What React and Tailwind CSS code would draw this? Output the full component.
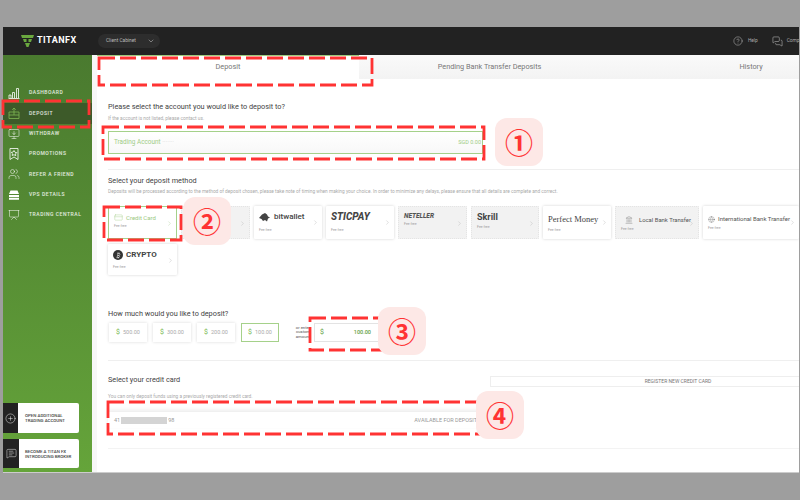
import {
  ChevronDown,
  ChevronRight,
  CircleHelp,
  MessagesSquare,
  CreditCard,
  Landmark,
  Globe,
  Bitcoin,
  CirclePlus,
  MonitorDown,
  Users,
  Presentation,
  MessageSquareText,
} from "lucide-react";

function BarsIcon({ className }) {
  return (
    <svg width="12" height="12" viewBox="0 0 12 12" fill="none" stroke="currentColor" strokeWidth="0.8" className={className}>
      <path d="M0.5 11.5h11M1 11V8h2v3M4.5 11V5.500h2V11M8.500 11V1.500h2V11" />
    </svg>
  );
}

function BoxIcon({ className }) {
  return (
    <svg width="12" height="12" viewBox="0 0 12 12" fill="none" stroke="currentColor" strokeWidth="0.8" className={className}>
      <path d="M1 5h10v6.500H1zM1 8h10M6 8V1M4.200 2.800 6 1l1.800 1.800" />
    </svg>
  );
}

function RibbonIcon({ className }) {
  return (
    <svg width="12" height="12" viewBox="0 0 12 12" fill="none" stroke="currentColor" strokeWidth="0.8" className={className}>
      <path d="M2 0.500h8v11L6 9l-4 2.500zM6 2.500l1 1.800 1.800.3-1.300 1.300.3 1.800L6 6.700l-1.800.8.300-1.800-1.300-1.300 1.800-.3z" />
    </svg>
  );
}

function ServerIcon({ className }) {
  return (
    <svg width="12" height="12" viewBox="0 0 12 12" fill="currentColor" className={className}>
      <path d="M2.500 1.500h7L11 5H1zM1 6h10v2.200H1zM1 9h10v1.800H1z" />
    </svg>
  );
}

const sideItems = [
  { label: "DASHBOARD", Icon: BarsIcon },
  { label: "DEPOSIT", Icon: BoxIcon, active: true },
  { label: "WITHDRAW", Icon: MonitorDown },
  { label: "PROMOTIONS", Icon: RibbonIcon },
  { label: "REFER A FRIEND", Icon: Users },
  { label: "VPS DETAILS", Icon: ServerIcon },
  { label: "TRADING CENTRAL", Icon: Presentation },
];

const amounts = ["500.00", "300.00", "200.00", "100.00"];

function FeeText() {
  return <p className="text-[3.5px] leading-none text-[#999]">Fee free</p>;
}

function MethodCard({ className, children, gray }) {
  return (
    <div
      className={`relative h-[33px] shrink-0 rounded-[1px] px-[5px] ${
        gray
          ? "bg-[#f2f2f2] border border-dotted border-[#e4e4e4]"
          : "bg-white shadow-[0_0_3px_rgba(0,0,0,0.18)]"
      } ${className}`}
    >
      {children}
      <ChevronRight
        size={7}
        strokeWidth={1}
        className="absolute right-[3px] top-[13px] text-[#999]"
      />
    </div>
  );
}

function Sidebar() {
  return (
    <aside className="flex w-[89px] shrink-0 flex-col justify-between bg-gradient-to-b from-[#4a7a2f] to-[#65a43a] pb-[4px] pt-[28px]">
      <nav className="flex flex-col">
        {sideItems.map(({ label, Icon, active }) => (
          <div
            key={label}
            className={`flex h-[20.3px] items-center gap-[9px] pl-[5px] ${
              active ? "bg-[#3d5a29]" : ""
            }`}
          >
            <Icon
              size={12}
              strokeWidth={1}
              className={active ? "text-[#7fb653]" : "text-white"}
            />
            <span className="text-[5px] font-medium tracking-[0.55px] text-white/85">
              {label}
            </span>
          </div>
        ))}
      </nav>
      <div className="flex flex-col gap-[6px] pr-[13px]">
        <div className="flex h-[30px] overflow-hidden rounded-r-[2px] bg-white">
          <div className="flex w-[15px] items-center justify-center bg-[#222]">
            <CirclePlus size={11} strokeWidth={1} className="text-white" />
          </div>
          <p className="self-center pl-[7px] text-[4.4px] font-medium leading-[5px] text-[#444]">
            OPEN ADDITIONAL
            <br />
            TRADING ACCOUNT
          </p>
        </div>
        <div className="flex h-[29px] overflow-hidden rounded-r-[2px] bg-white">
          <div className="flex w-[16px] items-center justify-center bg-[#222]">
            <MessageSquareText size={11} strokeWidth={1} className="text-white" />
          </div>
          <p className="self-center pl-[6px] text-[4.4px] font-medium leading-[5px] text-[#444]">
            BECOME A TITAN FX
            <br />
            INTRODUCING BROKER
          </p>
        </div>
      </div>
    </aside>
  );
}

function Tabs() {
  return (
    <div className="flex h-[24px] shrink-0 bg-gradient-to-b from-[#fafafa] to-[#f3f3f3] text-[7.3px] text-[#777]">
      <div className="flex w-[262px] shrink-0 items-center justify-center border-t border-[#9ccc7c] bg-white">
        Deposit
      </div>
      <div className="flex w-[261px] shrink-0 items-center justify-center">
        Pending Bank Transfer Deposits
      </div>
      <div className="flex w-[262px] shrink-0 items-center justify-center">
        History
      </div>
    </div>
  );
}

function MainPanel() {
  return (
    <main className="flex min-w-0 flex-1 flex-col overflow-hidden bg-[#f7f7f7] pl-[5px]">
      <Tabs />
      <div className="flex-1 bg-white pl-[11px]">
        <h2 className="pt-[22px] text-[7.3px] leading-[12px] text-[#444]">
          Please select the account you would like to deposit to?
        </h2>
        <p className="pt-[3px] text-[4.8px] leading-[6px] text-[#aaa]">
          If the account is not listed, please contact us.
        </p>
        <div className="mt-[9px] flex h-[23px] w-[375px] items-center justify-between border border-[#a5d18a] bg-gradient-to-b from-white to-[#f8f8f8] pl-[5px] pr-[1px] text-[6.4px] text-[#a0cc85]">
          <span>
            Trading Account <span className="text-[#ddd]">·······</span>
          </span>
          <span className="text-[5.5px]">SGD 0.00</span>
        </div>
        <div className="mt-[15px] border-t border-[#efefef]" />

        <h2 className="pt-[5px] text-[7.3px] leading-[12px] text-[#444]">
          Select your deposit method
        </h2>
        <p className="pt-[2px] text-[4.8px] leading-[6px] text-[#aaa]">
          Deposits will be processed according to the method of deposit chosen, please take note of timing when making your choice. In order to minimize any delays, please ensure that all details are complete and correct.
        </p>

        <div className="mt-[11px] flex w-[720px] flex-wrap gap-x-[4px] gap-y-[5px]">
          <div className="relative h-[33px] w-[69px] border border-[#a5d18a] bg-white px-[5px] pt-[6px]">
            <div className="flex items-center gap-[3px] text-[6px] text-[#9cc97f]">
              <CreditCard size={9} strokeWidth={1} />
              Credit Card
            </div>
            <div className="pt-[3px]">
              <FeeText />
            </div>
            <ChevronRight
              size={7}
              strokeWidth={1}
              className="absolute right-[3px] top-[13px] text-[#8dbb70]"
            />
          </div>
          <MethodCard gray className="w-[69px]" />
          <MethodCard className="w-[68px] pt-[6px]">
            <div className="flex items-center gap-[4px] text-[8px] font-medium leading-[10px] text-[#444]">
              <svg width="11" height="9" viewBox="0 0 11 9" fill="#444">
                <path d="M0 5 3 1.500 6 0l2 1.500 1 2 2 1-2 1-1 3-2-1.500L4 8 2.500 6z" />
              </svg>
              bitwallet
            </div>
            <div className="pt-[7px]">
              <FeeText />
            </div>
          </MethodCard>
          <MethodCard className="w-[68px] pt-[5px]">
            <p className="whitespace-nowrap text-[10px] font-extrabold italic leading-[11px] text-[#444]">
              STICPAY
            </p>
            <div className="pt-[7px]">
              <FeeText />
            </div>
          </MethodCard>
          <MethodCard gray className="w-[69px] pt-[5px]">
            <p className="text-[6.5px] font-extrabold italic leading-[8px] text-[#555]">
              NETELLER
            </p>
            <div className="pt-[3px]">
              <FeeText />
            </div>
          </MethodCard>
          <MethodCard gray className="w-[68px] pt-[5px]">
            <p className="text-[9px] font-bold leading-[10px] text-[#444]">Skrill</p>
            <div className="pt-[4px]">
              <FeeText />
            </div>
          </MethodCard>
          <MethodCard className="w-[68px] pt-[7px]">
            <p className="whitespace-nowrap font-['Liberation_Serif',serif] text-[8.5px] leading-[12px] text-[#444]">
              Perfect Money
            </p>
            <div className="pt-[4px]">
              <FeeText />
            </div>
          </MethodCard>
          <MethodCard gray className="w-[84px] pt-[9px]">
            <div className="flex items-center gap-[6px] whitespace-nowrap pl-[4px] text-[5.9px] leading-[8px] text-[#555]">
              <Landmark size={8} strokeWidth={1} />
              Local Bank Transfer
            </div>
            <div className="pt-[4px]">
              <FeeText />
            </div>
          </MethodCard>
          <MethodCard className="w-[96px] pt-[9px]">
            <div className="flex items-center gap-[3px] whitespace-nowrap text-[6px] leading-[8px] text-[#555]">
              <Globe size={7} strokeWidth={1} />
              International Bank Transfer
            </div>
            <div className="pt-[4px]">
              <FeeText />
            </div>
          </MethodCard>
          <MethodCard className="!h-[31px] w-[69px] pt-[6px]">
            <div className="flex items-center gap-[3px] text-[8px] font-bold leading-[10px] text-[#444]">
              <span className="flex size-[10px] items-center justify-center rounded-full bg-[#333]">
                <Bitcoin size={7} strokeWidth={1.5} className="text-white" />
              </span>
              CRYPTO
            </div>
            <div className="pt-[6px]">
              <FeeText />
            </div>
          </MethodCard>
        </div>

        <h2 className="pt-[33px] text-[7.3px] leading-[12px] text-[#444]">
          How much would you like to deposit?
        </h2>
        <div className="mt-[3px] ml-px flex items-center">
          <div className="flex gap-[6px]">
            {amounts.map((amount, i) => (
              <div
                key={amount}
                className={`flex h-[19px] w-[38px] items-center justify-center gap-[3px] bg-white text-[5.5px] text-[#aaa] ${
                  i === 3
                    ? "border border-[#a5d18a]"
                    : "shadow-[0_0_3px_rgba(0,0,0,0.15)]"
                }`}
              >
                <span className="text-[7px] text-[#76b84d]">$</span>
                {amount}
              </div>
            ))}
          </div>
          <p className="w-[35px] pl-[13px] text-center text-[4.2px] leading-[4.6px] text-[#555]">
            or enter custom amount
          </p>
          <div className="flex h-[19px] w-[66px] items-center justify-between border border-[#e3e3e3] bg-white px-[5px] text-[#5d9e3a]">
            <span className="text-[7px]">$</span>
            <span className="pr-[3px] text-[5.5px] font-medium">100.00</span>
          </div>
        </div>
        <div className="mt-[18px] border-t border-[#efefef]" />

        <div className="flex w-[758px] items-start justify-between pt-[13px]">
          <h2 className="text-[7.3px] leading-[12px] text-[#444]">
            Select your credit card
          </h2>
          <div className="mt-[2px] flex h-[11px] w-[376px] shrink-0 items-center justify-center border border-[#eee] bg-white text-[5px] text-[#777]">
            REGISTER NEW CREDIT CARD
          </div>
        </div>
        <p className="pt-[7px] text-[4.8px] leading-[6px] text-[#aaa]">
          You can only deposit funds using a previously registered credit card.
        </p>
        <div className="mt-[12px] flex h-[16px] w-[382px] items-center justify-between bg-white pl-[6px] pr-[13px] text-[5.5px] text-[#999] shadow-[0_-2px_4px_rgba(0,0,0,0.08)]">
          <span className="flex items-center">
            41
            <span className="mx-[1px] h-[7px] w-[46px] bg-[#d4d4d4]" />
            98
          </span>
          <span className="whitespace-nowrap">AVAILABLE FOR DEPOSIT</span>
        </div>
        <div className="mt-[20px] border-t border-[#f3f3f3]" />
      </div>
    </main>
  );
}

export default function App() {
  return (
    <div className="relative h-[500px] w-[800px] overflow-hidden bg-[#9e9e9e] pb-[27px] pl-[3px] pr-px pt-[27px] font-['Roboto',sans-serif]">
      <div className="flex h-[446px] flex-col overflow-hidden border-b border-[#ccc] bg-white">
        <header className="flex h-[28px] shrink-0 items-center bg-[#222] pl-[18px]">
          <div className="flex w-[77px] items-center gap-[3px]">
            <svg width="13" height="12" viewBox="0 0 13 12">
              <path d="M0 0h13l-1 3H1zM2 4h3.500v3H3zM7.500 4H11l-1 3H7.500zM4 8h5l-1.500 4h-2z" fill="#6aa83f" />
            </svg>
            <span className="text-[9px] font-bold tracking-[0.5px] text-white">TITANFX</span>
          </div>
          <div className="flex h-[14px] w-[62px] items-center justify-between rounded-full bg-[#2d2d2d] pl-[8px] pr-[5px] text-[4.8px] text-[#bbb]">
            Client Cabinet
            <ChevronDown size={8} strokeWidth={1.5} className="text-[#ccc]" />
          </div>
          <div className="ml-auto -mr-[8px] flex items-center gap-[2px] text-[4.8px] text-[#aaa]">
            <CircleHelp size={10} strokeWidth={1} className="text-[#ddd]" />
            <span className="pl-[3px]">Help</span>
            <MessagesSquare size={11} strokeWidth={1} className="ml-[12px] text-[#ddd]" />
            <span className="pl-[2px]">Company</span>
          </div>
        </header>
        <div className="flex min-h-0 flex-1">
          <Sidebar />
          <MainPanel />
        </div>
      </div>

      {/* annotations on top of the screenshot */}
      <svg className="pointer-events-none absolute inset-0" width="800" height="500">
        <g fill="none" stroke="#ff3333" strokeWidth="2.8" strokeDasharray="16 5">
          <rect x="99" y="58" width="273" height="27" />
          <rect x="3" y="101" width="86" height="26" />
          <rect x="103" y="127" width="381" height="32" />
          <rect x="104" y="207" width="77" height="33" />
          <rect x="310" y="318" width="75" height="32" />
          <rect x="108" y="402" width="375" height="32" />
        </g>
      </svg>
      {["①", "②", "③", "④"].map((n, i) => (
        <div
          key={n}
          className={`absolute flex size-[48px] items-center justify-center rounded-[12px] bg-[#fde8e6] font-['Noto_Sans_CJK_JP',sans-serif] text-[28px] font-bold leading-none text-[#ff3333] ${
            ["left-[495px] top-[118px]", "left-[183px] top-[197px]", "left-[378px] top-[307px]", "left-[476px] top-[391px]"][i]
          }`}
        >
          {n}
        </div>
      ))}
    </div>
  );
}
